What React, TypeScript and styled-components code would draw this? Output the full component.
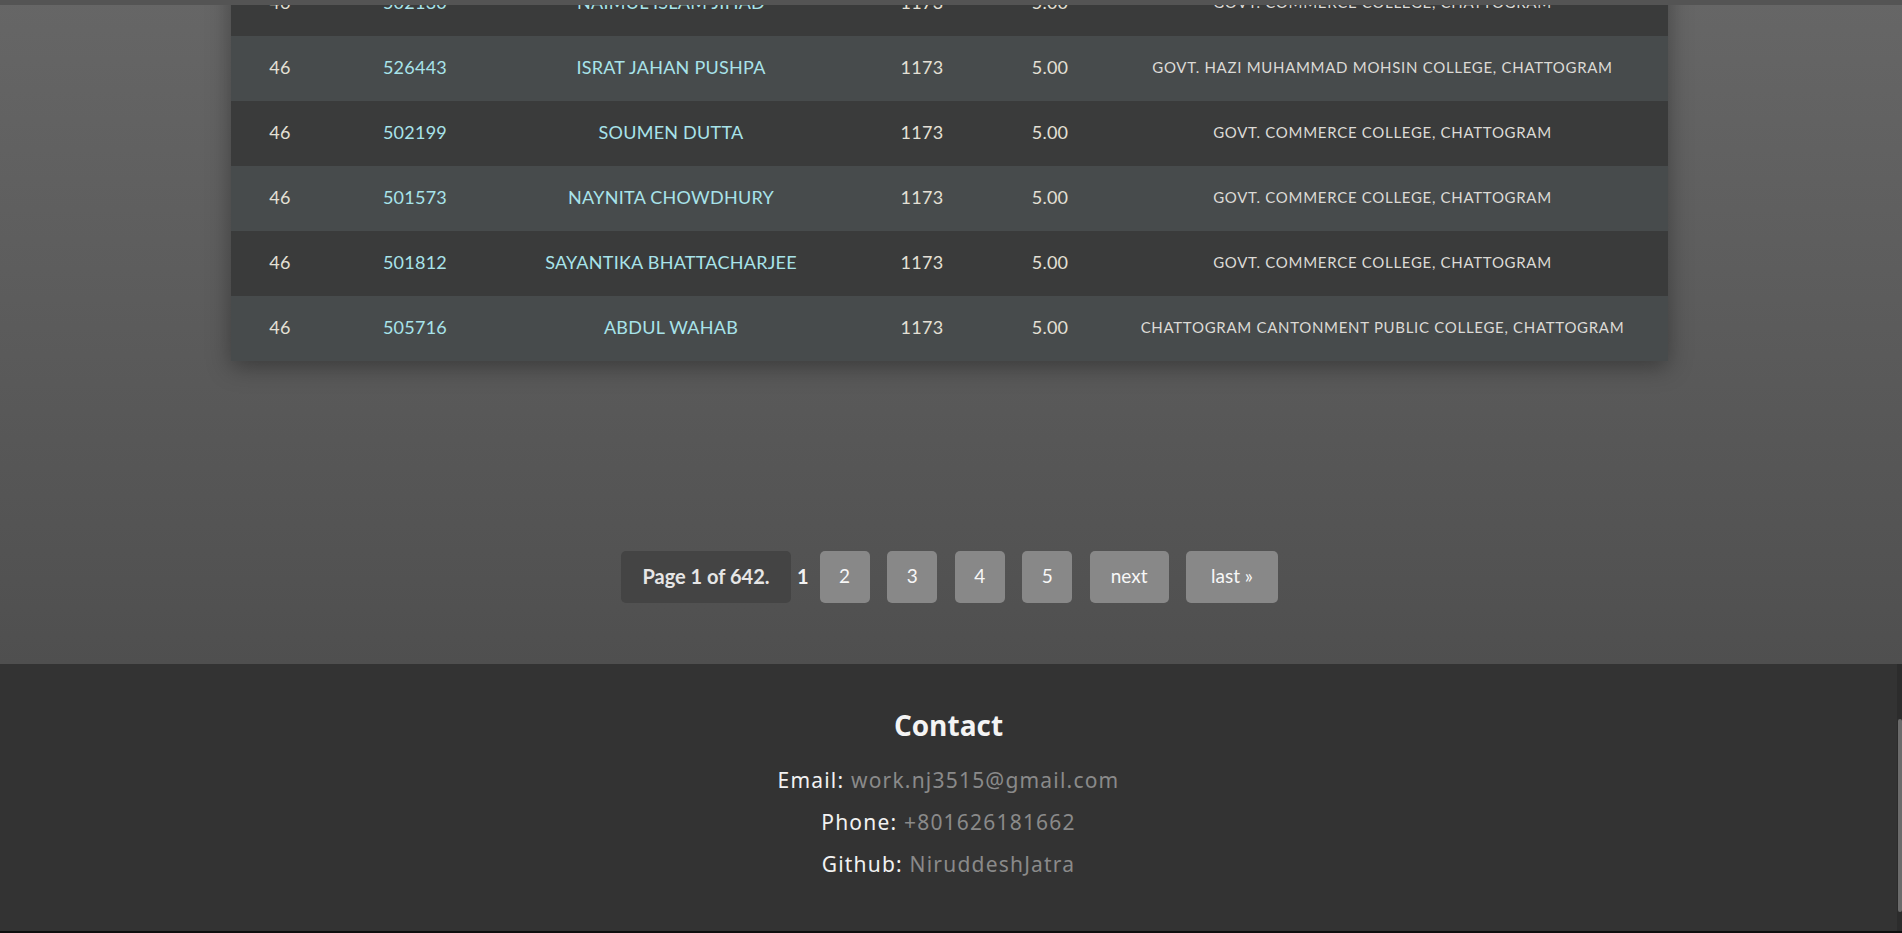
import React from "react";
import styled, { createGlobalStyle } from "styled-components";

const GlobalStyle = createGlobalStyle`
  html, body {
    margin: 0;
    padding: 0;
    background: #0e0e0e;
    overflow: hidden;
  }
  body {
    font-family: Lato, "Liberation Sans", sans-serif;
  }
  * { box-sizing: border-box; }
`;

const TopBar = styled.div`
  position: fixed;
  top: 0;
  left: 0;
  right: 0;
  height: 5px;
  background: #545454;
  z-index: 10;
`;

const Page = styled.div`
  width: 100%;
  display: flex;
  flex-direction: column;
`;

const Main = styled.main`
  background: linear-gradient(to bottom, #666666 0%, #5c5c5c 45%, #4f4f4f 100%);
  padding: 0 3px 61px 0;
  display: flex;
  flex-direction: column;
  align-items: center;
`;

const Table = styled.div`
  width: 1437px;
  margin-top: -29px;
  box-shadow: 0 6px 22px rgba(0, 0, 0, 0.35);
`;

const Row = styled.div<{ $alt: boolean }>`
  display: grid;
  grid-template-columns: 98px 172px 340px 162px 94px 1fr;
  height: 65px;
  padding-bottom: 4px;
  align-items: center;
  background: ${(p) => (p.$alt ? "#474b4c" : "#3a3b3b")};
`;

const Cell = styled.div<{ $tone: "num" | "link" | "college" }>`
  text-align: center;
  font-family: Lato, "Liberation Sans", sans-serif;
  font-size: ${(p) => (p.$tone === "college" ? "15px" : "18px")};
  letter-spacing: ${(p) => (p.$tone === "college" ? "0.7px" : "0.25px")};
  color: ${(p) =>
    p.$tone === "link" ? "#a8e3ea" : p.$tone === "college" ? "#dcdad6" : "#e4e0d6"};
  white-space: nowrap;
`;

const Pagination = styled.nav`
  margin-top: 190px;
  display: flex;
  align-items: center;
  gap: 17.5px;
`;

const PageInfo = styled.span`
  height: 52px;
  display: flex;
  align-items: center;
  padding: 0 21.5px 3px;
  background: #444444;
  border-radius: 5px;
  font-family: Lato, "Liberation Sans", sans-serif;
  font-weight: 700;
  font-size: 20px;
  color: #e6e6e6;
`;

const Current = styled.span`
  font-family: Lato, "Liberation Sans", sans-serif;
  font-weight: 700;
  font-size: 20px;
  color: #f2f2f2;
  margin: 0 -6.5px 0 -11.5px;
  padding-bottom: 3px;
`;

const PageButton = styled.a<{ $pad?: number }>`
  height: 52px;
  display: flex;
  align-items: center;
  padding: 0 ${(p) => p.$pad ?? 19.5}px 3px;
  background: #888888;
  border-radius: 5px;
  font-family: Lato, "Liberation Sans", sans-serif;
  font-size: 19px;
  color: #f7f7f7;
  text-decoration: none;
`;

const Footer = styled.footer`
  height: 267px;
  display: flex;
  background: #333333;
`;

const FooterBody = styled.div`
  flex: 1;
  display: flex;
  flex-direction: column;
  align-items: center;
  padding-top: 44px;
`;

const ScrollTrack = styled.div`
  width: 5px;
  background: #2c2c2c;
  display: flex;
  flex-direction: column;
  align-items: flex-end;
`;

const ScrollThumb = styled.div`
  margin-top: 55px;
  width: 4px;
  height: 193px;
  background: #6b6b6b;
  border-radius: 2px;
`;

const ContactTitle = styled.h2`
  margin: 0 0 17px;
  font-family: "Open Sans", "Noto Sans", sans-serif;
  font-weight: 700;
  font-size: 28px;
  line-height: 34px;
  color: #f4f4f4;
`;

const ContactLine = styled.p`
  margin: 0;
  font-family: "Noto Sans", "Open Sans", sans-serif;
  font-size: 21px;
  line-height: 42px;
  letter-spacing: 1.2px;
  color: #f2f2f2;
`;

const ContactValue = styled.span`
  color: #8a8a8a;
`;

type Student = {
  merit: string;
  roll: string;
  name: string;
  marks: string;
  gpa: string;
  college: string;
};

const students: Student[] = [
  { merit: "46", roll: "502130", name: "NAIMUL ISLAM JIHAD", marks: "1173", gpa: "5.00", college: "GOVT. COMMERCE COLLEGE, CHATTOGRAM" },
  { merit: "46", roll: "526443", name: "ISRAT JAHAN PUSHPA", marks: "1173", gpa: "5.00", college: "GOVT. HAZI MUHAMMAD MOHSIN COLLEGE, CHATTOGRAM" },
  { merit: "46", roll: "502199", name: "SOUMEN DUTTA", marks: "1173", gpa: "5.00", college: "GOVT. COMMERCE COLLEGE, CHATTOGRAM" },
  { merit: "46", roll: "501573", name: "NAYNITA CHOWDHURY", marks: "1173", gpa: "5.00", college: "GOVT. COMMERCE COLLEGE, CHATTOGRAM" },
  { merit: "46", roll: "501812", name: "SAYANTIKA BHATTACHARJEE", marks: "1173", gpa: "5.00", college: "GOVT. COMMERCE COLLEGE, CHATTOGRAM" },
  { merit: "46", roll: "505716", name: "ABDUL WAHAB", marks: "1173", gpa: "5.00", college: "CHATTOGRAM CANTONMENT PUBLIC COLLEGE, CHATTOGRAM" },
];

export default function App() {
  return (
    <>
      <GlobalStyle />
      <TopBar />
      <Page>
        <Main>
          <Table>
            {students.map((s, i) => (
              <Row key={s.roll} $alt={i % 2 === 1}>
                <Cell $tone="num">{s.merit}</Cell>
                <Cell $tone="link">{s.roll}</Cell>
                <Cell $tone="link">{s.name}</Cell>
                <Cell $tone="num">{s.marks}</Cell>
                <Cell $tone="num">{s.gpa}</Cell>
                <Cell $tone="college">{s.college}</Cell>
              </Row>
            ))}
          </Table>
          <Pagination>
            <PageInfo>Page 1 of 642.</PageInfo>
            <Current>1</Current>
            <PageButton href="#">2</PageButton>
            <PageButton href="#">3</PageButton>
            <PageButton href="#">4</PageButton>
            <PageButton href="#">5</PageButton>
            <PageButton href="#" $pad={21}>next</PageButton>
            <PageButton href="#" $pad={25}>last »</PageButton>
          </Pagination>
        </Main>
        <Footer>
          <FooterBody>
            <ContactTitle>Contact</ContactTitle>
            <ContactLine>
              Email: <ContactValue>work.nj3515@gmail.com</ContactValue>
            </ContactLine>
            <ContactLine>
              Phone: <ContactValue>+801626181662</ContactValue>
            </ContactLine>
            <ContactLine>
              Github: <ContactValue>NiruddeshJatra</ContactValue>
            </ContactLine>
          </FooterBody>
          <ScrollTrack>
            <ScrollThumb />
          </ScrollTrack>
        </Footer>
      </Page>
    </>
  );
}
